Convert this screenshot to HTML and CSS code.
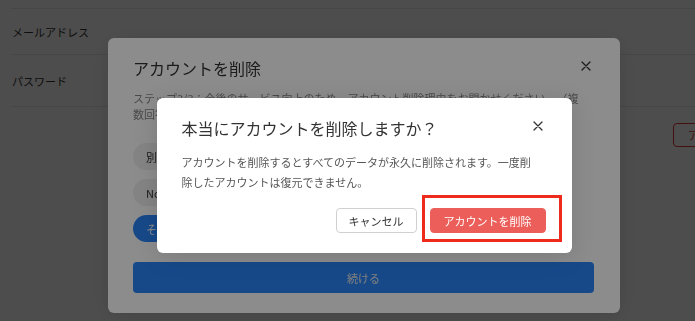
FILE: index.html
```html
<!DOCTYPE html>
<html lang="ja">
<head>
	<meta charset="UTF-8">
	<title>アカウント設定</title>
	<link rel="stylesheet" href="styles.css">
</head>
<body>
	<div class="page">
		<div class="settings">
			<div class="row row-email">
				<span class="label">メールアドレス</span>
			</div>
			<div class="row row-password">
				<span class="label">パスワード</span>
			</div>
			<div class="row row-delete">
				<button class="outline-danger">アカウントを削除</button>
			</div>
		</div>
	</div>

	<!-- 削除理由 -->
	<div class="overlay">
		<div class="modal modal-reason">
			<div class="modal-head">
				<h2>アカウントを削除</h2>
				<button class="close">
					<svg width="10" height="10" viewBox="0 0 10 10"><path d="M1 1L9 9M9 1L1 9" stroke="currentColor" stroke-width="1.3" stroke-linecap="round"/></svg>
				</button>
			</div>
			<p class="step">ステップ3/3：今後のサービス向上のため、アカウント削除理由をお聞かせください。（複数回答可）</p>
			<div class="reasons">
				<span class="reason">別のサービスを利用するため</span>
				<span class="reason">Notionに乗り換えるため</span>
				<span class="reason is-selected">その他</span>
			</div>
			<button class="continue">続ける</button>
		</div>
	</div>

	<!-- 確認 -->
	<div class="overlay">
		<div class="modal modal-confirm">
			<div class="modal-head">
				<h2>本当にアカウントを削除しますか？</h2>
				<button class="close">
					<svg width="10" height="10" viewBox="0 0 10 10"><path d="M1 1L9 9M9 1L1 9" stroke="currentColor" stroke-width="1.3" stroke-linecap="round"/></svg>
				</button>
			</div>
			<p class="message">アカウントを削除するとすべてのデータが永久に削除されます。一度削除したアカウントは復元できません。</p>
			<div class="actions">
				<button class="btn btn-cancel">キャンセル</button>
				<div class="highlight">
					<button class="btn btn-danger">アカウントを削除</button>
				</div>
			</div>
		</div>
	</div>
</body>
</html>
```

FILE: styles.css
```css
*{
	margin: 0;
	padding: 0;
	box-sizing: border-box;
}
body{
	font-family: "Noto Sans CJK JP", "Noto Sans", sans-serif;
	font-size: 11px;
	color: #333;
	background-color: #fff;
	overflow: hidden;
	text-spacing-trim: space-all;
}
button{
	font: inherit;
	cursor: pointer;
}

/* 設定ページ */
.page{
	padding-top: 8px;
}
.settings{
	width: 780px;
	margin-left: 11px;
	border-top: 1px solid #e8e8e8;
}
.row{
	display: flex;
	align-items: center;
	padding-left: 1px;
	border-bottom: 1px solid #e8e8e8;
}
.row-email{
	height: 46px;
}
.row-password{
	height: 52px;
}
.row-delete{
	justify-content: flex-end;
	padding: 16px 0;
	border-bottom: none;
}
.outline-danger{
	height: 24px;
	padding: 0 14px;
	border: 1px solid #e53935;
	border-radius: 4px;
	background-color: #fff;
	color: #e53935;
}

/* モーダル */
.overlay{
	position: fixed;
	top: 0;
	left: 0;
	width: 728px;
	height: 351px;
	background-color: rgba(0, 0, 0, .45);
	display: flex;
	align-items: center;
	justify-content: center;
}
.modal{
	background-color: #fff;
	border-radius: 6px;
	box-shadow: 0 4px 24px rgba(0, 0, 0, .12);
	padding: 18px 26px 20px 25px;
}
.modal-reason{
	width: 512px;
}
.modal-confirm{
	width: 415px;
}
.modal-head{
	display: flex;
	align-items: center;
	justify-content: space-between;
	height: 24px;
}
.modal-head h2{
	font-size: 16px;
	font-weight: 400;
	line-height: 24px;
	color: #333;
}
.close{
	width: 16px;
	height: 16px;
	margin-top: -5px;
	border: none;
	background: none;
	color: #333;
	display: flex;
	align-items: center;
	justify-content: center;
}
.step{
	margin-top: 10px;
	padding-right: 8px;
	line-height: 16px;
	color: #888;
}
.reasons{
	margin-top: 21px;
	display: flex;
	flex-direction: column;
	align-items: flex-start;
	gap: 9px;
}
.reason{
	height: 27px;
	padding: 0 13px;
	border-radius: 14px;
	background-color: #f0f0f0;
	display: flex;
	align-items: center;
}
.reason.is-selected{
	background-color: #2a85fa;
	color: #fff;
}
.continue{
	width: 100%;
	height: 31px;
	margin-top: 20px;
	border: none;
	border-radius: 4px;
	background-color: #2a85fa;
	color: #e8e8e8;
}
.message{
	max-width: 352px;
	margin-top: 12px;
	line-height: 20px;
	color: #555;
}
.actions{
	margin-top: 16px;
	display: flex;
	justify-content: flex-end;
	gap: 13px;
}
.btn{
	height: 25px;
	padding: 0 12px;
	border-radius: 4px;
}
.btn-cancel{
	border: 1px solid #d0d0d0;
	background-color: #fff;
	color: #333;
}
.btn-danger{
	padding: 0 13px;
	border: 1px solid #eb5e5a;
	background-color: #eb5e5a;
	color: #fff;
}
.highlight{
	position: relative;
	display: flex;
}
.highlight::after{
	content: "";
	position: absolute;
	top: -13px;
	right: -16px;
	bottom: -9px;
	left: -8px;
	border: 3px solid #ee2a1d;
	pointer-events: none;
}
```
